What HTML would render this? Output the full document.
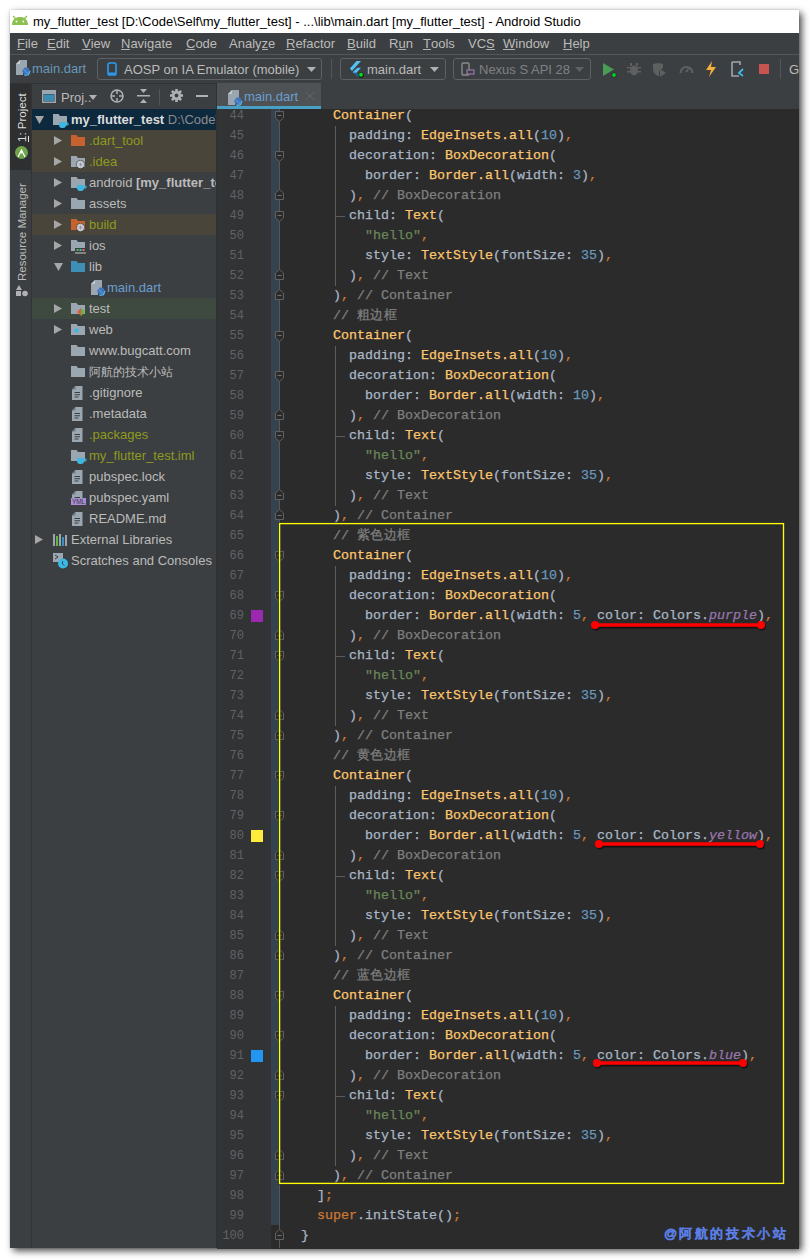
<!DOCTYPE html><html><head><meta charset="utf-8"><style>
*{box-sizing:border-box}
html,body{margin:0;padding:0}
body{width:810px;height:1260px;background:#fff;position:relative;overflow:hidden;font-family:"Liberation Sans",sans-serif;}
.a{position:absolute}
svg{position:absolute;overflow:visible}
.win{left:10px;top:10px;width:789px;height:1238px;background:#3c3f41;box-shadow:3px 3px 7px rgba(0,0,0,.7),0 0 2px rgba(0,0,0,.15)}
.title{left:10px;top:10px;width:789px;height:23px;background:#fff}
.ttxt{left:33px;top:13px;font-size:13px;color:#000;white-space:nowrap;line-height:17px}
.menu{left:10px;top:33px;width:789px;height:21px;background:#3c3f41}
.mi{top:34.5px;font-size:13px;color:#bbbbbb;line-height:17px;white-space:nowrap}
.mi u{text-decoration:none;position:relative}.mi u::after{content:'';position:absolute;left:0;right:0;top:13px;height:1px;background:#b0b0b0}
.sep1{left:10px;top:54px;width:789px;height:1px;background:#515658}
.tb{left:10px;top:55px;width:789px;height:28px;background:#3c3f41}
.sep2{left:10px;top:83px;width:789px;height:1px;background:#2f3133}
.t13{font-size:13px;line-height:17px;white-space:nowrap;color:#bbbbbb}
.combo{border:1px solid #5e6162;border-radius:3px;height:22px;top:58px}
.stripe{left:10px;top:84px;width:21px;height:1164px;background:#3c3f41}
.stripesel{left:10px;top:84px;width:21px;height:86px;background:#2d2f30}
.stripeline{left:31px;top:84px;width:1px;height:1164px;background:#323435}
.proj{left:32px;top:84px;width:184px;height:1164px;background:#3c3f41}
.projline{left:216px;top:84px;width:1px;height:1164px;background:#2f3133}
.tabbar{left:217px;top:83px;width:582px;height:26px;background:#3c3f41}
.tab{left:217px;top:83px;width:104px;height:26px;background:#4e5254}
.tabul{left:217px;top:106px;width:104px;height:3px;background:#4a9fc4}
.editor{left:217px;top:109px;width:582px;height:1140px;background:#2b2b2b;overflow:hidden}
.gutter{left:217px;top:109px;width:54px;height:1140px;background:#313335}
.gbar{left:271px;top:109px;width:8px;height:1116px;background:#34434d}
.row{left:32px;width:184px;height:21px}
.ln{font-family:"Liberation Mono",monospace;font-size:12px;color:#606366;text-align:right;width:30px;left:214px;line-height:20px;white-space:pre}
.cl{font-family:"Liberation Mono",monospace;font-size:13.33px;white-space:pre;line-height:20px;left:301px;color:#a9b7c6;-webkit-text-stroke:0.25px currentColor}
.k{color:#ffc66d}.n{color:#6897bb}.s{color:#6a8759}.o{color:#cc7832}.c{color:#808080}.p{color:#9876aa;font-style:italic}
</style></head><body>
<div class="a win"></div>
<div class="a title"></div>
<svg style="left:12px;top:15px" width="16" height="10" viewBox="0 0 16 10"><path d="M0 10 C0 4.5 3.5 2 8 2 C12.5 2 16 4.5 16 10 Z" fill="#8cc152"/><line x1="1" y1="1" x2="3.5" y2="3.5" stroke="#8cc152" stroke-width="1.2"/><line x1="15" y1="1" x2="12.5" y2="3.5" stroke="#8cc152" stroke-width="1.2"/><circle cx="4.5" cy="6.5" r="0.9" fill="#fff"/><circle cx="11.3" cy="6.5" r="0.9" fill="#fff"/></svg>
<div class="a ttxt">my_flutter_test [D:\Code\Self\my_flutter_test] - ...\lib\main.dart [my_flutter_test] - Android Studio</div>
<div class="a menu"></div>
<div class="a mi" style="left:17px"><u>F</u>ile</div>
<div class="a mi" style="left:47px"><u>E</u>dit</div>
<div class="a mi" style="left:82px"><u>V</u>iew</div>
<div class="a mi" style="left:121px"><u>N</u>avigate</div>
<div class="a mi" style="left:186px"><u>C</u>ode</div>
<div class="a mi" style="left:229px">Analy<u>z</u>e</div>
<div class="a mi" style="left:286px"><u>R</u>efactor</div>
<div class="a mi" style="left:347px"><u>B</u>uild</div>
<div class="a mi" style="left:389px">R<u>u</u>n</div>
<div class="a mi" style="left:423px"><u>T</u>ools</div>
<div class="a mi" style="left:468px">VC<u>S</u></div>
<div class="a mi" style="left:503px"><u>W</u>indow</div>
<div class="a mi" style="left:563px"><u>H</u>elp</div>
<div class="a sep1"></div>
<div class="a tb"></div>
<div class="a sep2"></div>
<svg style="left:16px;top:60px" width="14" height="16" viewBox="0 0 14 16"><path d="M4 0 H11 V8 L7 10 V15 H0 V4 Z" fill="#9aa7b0"/><path d="M0 4 L4 0 V4 Z" fill="#c4cbd0"/><path d="M6 11 L8.5 7.5 L12 7.5 L14 11 L12.5 14.5 L8.5 15 Z" fill="#3f75bf"/><path d="M7.5 9.5 L12 13.5" stroke="#6aa0e0" stroke-width="1"/><path d="M8.5 15.3 L12.5 14.8 L14 11" fill="none" stroke="#50bef0" stroke-width="1.2"/></svg>
<div class="a t13" style="left:32px;top:60px;color:#6897bb">main.dart</div>
<div class="a combo" style="left:97px;width:225px"></div>
<svg style="left:107px;top:62px" width="10" height="14" viewBox="0 0 10 14"><rect x="1" y="1" width="8" height="12" rx="1.8" fill="none" stroke="#2b9cf2" stroke-width="1.6"/><rect x="2" y="10.5" width="6" height="2" fill="#2b9cf2"/></svg>
<div class="a t13" style="left:124px;top:61px">AOSP on IA Emulator (mobile)</div>
<svg style="left:307px;top:67px" width="9" height="5" viewBox="0 0 9 5"><path d="M0 0 H9 L4.5 5 Z" fill="#afb1b3"/></svg>
<div class="a" style="left:331px;top:59px;width:1px;height:20px;background:#515658"></div>
<div class="a combo" style="left:340px;width:106px"></div>
<svg style="left:348px;top:59px" width="17" height="20" viewBox="0 0 17 20"><path d="M1.9 9.5 L8.5 2 H13 L4 12 Z" fill="#52c2f5"/><path d="M4.6 13.3 L9.5 8.8 H13 L7.3 15 Z" fill="#52c2f5"/><path d="M4.6 13.3 L7.3 15 L8.5 16.5 L10.5 18 L12 17 L9 14 Z" fill="#1e63a8"/><circle cx="13.2" cy="16" r="2.6" fill="#111"/><circle cx="13" cy="15.8" r="2" fill="#00e01a"/></svg>
<div class="a t13" style="left:367px;top:61px">main.dart</div>
<svg style="left:430px;top:67px" width="9" height="5" viewBox="0 0 9 5"><path d="M0 0 H9 L4.5 5 Z" fill="#afb1b3"/></svg>
<div class="a combo" style="left:453px;width:138px"></div>
<svg style="left:461px;top:62px" width="14" height="14" viewBox="0 0 14 14"><rect x="1" y="1" width="7" height="12" rx="1" fill="none" stroke="#8c8c8c" stroke-width="1.4"/><rect x="6" y="8" width="7" height="4" fill="#3c3f41" stroke="#9876aa" stroke-width="1.2"/></svg>
<div class="a t13" style="left:479px;top:61px;color:#7f8183">Nexus S API 28</div>
<svg style="left:575px;top:67px" width="9" height="5" viewBox="0 0 9 5"><path d="M0 0 H9 L4.5 5 Z" fill="#5f6163"/></svg>
<svg style="left:602px;top:62px" width="14" height="16" viewBox="0 0 14 16"><path d="M1 1 L12 7.5 L1 14 Z" fill="#499c54"/><circle cx="12" cy="13" r="2.6" fill="#2b2b2b"/><circle cx="12" cy="13" r="1.9" fill="#00d12a"/></svg>
<svg style="left:627px;top:62px" width="14" height="14" viewBox="0 0 14 14" fill="#5e6060"><ellipse cx="7" cy="8.5" rx="4" ry="5"/><rect x="0" y="5" width="14" height="1.5"/><rect x="0" y="9" width="14" height="1.5"/><rect x="3" y="1" width="2" height="3"/><rect x="9" y="1" width="2" height="3"/></svg>
<svg style="left:652px;top:62px" width="15" height="15" viewBox="0 0 15 15" fill="#5e6060"><path d="M1 2 L6 1 L11 2 V6 L7 9 V14 L6 14 C3 13 1 10 1 7 Z"/><path d="M8 7 L14 11 L8 15 Z"/></svg>
<svg style="left:679px;top:63px" width="15" height="12" viewBox="0 0 15 12"><path d="M1.5 10 A6 6 0 0 1 13.5 10" fill="none" stroke="#5e6060" stroke-width="2.2"/><path d="M7 9 L11 4" stroke="#5e6060" stroke-width="2"/></svg>
<svg style="left:705px;top:61px" width="12" height="16" viewBox="0 0 12 16"><path d="M7 0 L1 9 H6 L4 16 L11 6 H6 Z" fill="#f4af3d"/></svg>
<svg style="left:731px;top:61px" width="14" height="16" viewBox="0 0 14 16"><path d="M1 1 H9 V4 M1 1 V15 H8" fill="none" stroke="#9aa7b0" stroke-width="1.6"/><path d="M12 8 L8 12 L12 15" fill="none" stroke="#40b6e0" stroke-width="1.8"/></svg>
<div class="a" style="left:759px;top:64px;width:10px;height:10px;background:#c75450"></div>
<div class="a" style="left:780px;top:59px;width:1px;height:20px;background:#515658"></div>
<div class="a t13" style="left:789px;top:61px">G</div>
<div class="a stripe"></div><div class="a stripesel"></div><div class="a stripeline"></div>
<div class="a t13" style="left:15px;top:142px;transform-origin:0 0;transform:rotate(-90deg);font-size:11.5px;color:#dddddd;line-height:15px"><u style="text-decoration:none;border-bottom:1px solid #ddd;line-height:9.5px;display:inline-block">1</u>: Project</div>
<svg style="left:15px;top:146px" width="13" height="13" viewBox="0 0 13 13"><circle cx="6.5" cy="6.5" r="6.5" fill="#6fa64c"/><path d="M3 11 L6.5 4 L10 11" fill="none" stroke="#fff" stroke-width="1.2"/><circle cx="6.5" cy="6" r="1.5" fill="#fff"/></svg>
<div class="a t13" style="left:15px;top:281px;transform-origin:0 0;transform:rotate(-90deg);font-size:11.5px;line-height:15px">Resource Manager</div>
<svg style="left:16px;top:285px" width="12" height="12" viewBox="0 0 12 12" fill="#afb1b3"><path d="M3 0 L6 5 H0 Z"/><rect x="0" y="6" width="5" height="5"/><circle cx="9" cy="8.5" r="2.8"/></svg>
<div class="a proj"></div><div class="a projline"></div>
<svg style="left:42px;top:90px" width="14" height="13" viewBox="0 0 14 13"><path d="M0 0 H14 V13 H0 Z M1.5 4 V11.5 H12.5 V4 Z" fill="#9aa7b0" fill-rule="evenodd"/><rect x="2" y="4.5" width="10" height="6.5" fill="#3a8cb0"/></svg>
<div class="a t13" style="left:61px;top:89px">Proj..</div>
<svg style="left:89px;top:95px" width="8" height="5" viewBox="0 0 8 5"><path d="M0 0 H8 L4 5 Z" fill="#afb1b3"/></svg>
<svg style="left:110px;top:89px" width="14" height="14" viewBox="0 0 14 14"><circle cx="7" cy="7" r="6" fill="none" stroke="#afb1b3" stroke-width="1.5"/><path d="M7 1 V5 M7 9 V13 M1 7 H5 M9 7 H13" stroke="#afb1b3" stroke-width="1.5"/></svg>
<svg style="left:137px;top:89px" width="13" height="14" viewBox="0 0 13 14" fill="#afb1b3"><rect x="0" y="6" width="13" height="1.5"/><path d="M3 0 H10 L6.5 4 Z"/><path d="M3 14 H10 L6.5 10 Z"/></svg>
<div class="a" style="left:159px;top:89px;width:1px;height:16px;background:#515658"></div>
<svg style="left:170px;top:89px" width="13" height="13" viewBox="0 0 13 13"><g fill="#afb1b3"><rect x="5.2" y="0" width="2.6" height="3" transform="rotate(0 6.5 6.5)"/><rect x="5.2" y="0" width="2.6" height="3" transform="rotate(45 6.5 6.5)"/><rect x="5.2" y="0" width="2.6" height="3" transform="rotate(90 6.5 6.5)"/><rect x="5.2" y="0" width="2.6" height="3" transform="rotate(135 6.5 6.5)"/><rect x="5.2" y="0" width="2.6" height="3" transform="rotate(180 6.5 6.5)"/><rect x="5.2" y="0" width="2.6" height="3" transform="rotate(225 6.5 6.5)"/><rect x="5.2" y="0" width="2.6" height="3" transform="rotate(270 6.5 6.5)"/><rect x="5.2" y="0" width="2.6" height="3" transform="rotate(315 6.5 6.5)"/><circle cx="6.5" cy="6.5" r="4.6"/></g><circle cx="6.5" cy="6.5" r="1.9" fill="#3c3f41"/></svg>
<div class="a" style="left:196px;top:95px;width:12px;height:2px;background:#afb1b3"></div>
<div class="a" style="left:32px;top:109px;width:184px;height:462px;overflow:hidden">
<div class="a" style="left:0;top:0px;width:184px;height:21px;background:#0d293e"></div>
<svg style="left:3px;top:7px" width="9" height="8" viewBox="0 0 9 8"><path d="M0 0 H9 L4.5 8 Z" fill="#a6a6a6"/></svg>
<svg style="left:21px;top:5px" width="14" height="12" viewBox="0 0 14 12"><path d="M0 0 H5.5 L7 2 H14 V11 H0 Z" fill="#9aa7b0"/></svg>
<svg style="left:27px;top:13px" width="9" height="6" viewBox="0 0 9 6"><path d="M0 0 H7 V3 A3 3 0 0 1 4 6 H3 A3 3 0 0 1 0 3 Z" fill="#40b6e0"/><path d="M7 1 H9 V3 H7" fill="none" stroke="#40b6e0" stroke-width="1"/></svg>
<div class="a t13" style="left:39px;top:2px;color:#bbbbbb"><b style="color:#dddddd">my_flutter_test</b> <span style="color:#8c8c8c">D:\Code\Self\my_flutter_test</span></div>
<div class="a" style="left:0;top:21px;width:184px;height:21px;background:#49453a"></div>
<svg style="left:22px;top:27px" width="8" height="9" viewBox="0 0 8 9"><path d="M0 0 L8 4.5 L0 9 Z" fill="#a6a6a6"/></svg>
<svg style="left:39px;top:26px" width="14" height="12" viewBox="0 0 14 12"><path d="M0 0 H5.5 L7 2 H14 V11 H0 Z" fill="#c5622f"/></svg>
<div class="a t13" style="left:57px;top:23px;color:#8e9a1e">.dart_tool</div>
<div class="a" style="left:0;top:42px;width:184px;height:21px;background:#49453a"></div>
<svg style="left:22px;top:48px" width="8" height="9" viewBox="0 0 8 9"><path d="M0 0 L8 4.5 L0 9 Z" fill="#a6a6a6"/></svg>
<svg style="left:39px;top:47px" width="14" height="12" viewBox="0 0 14 12"><path d="M0 0 H5.5 L7 2 H14 V11 H0 Z" fill="#9aa7b0"/></svg>
<svg style="left:44px;top:51px" width="9" height="9" viewBox="0 0 9 9"><circle cx="4.5" cy="4.5" r="4.6" fill="#3c3f41" opacity=".6"/><g fill="#c6ccd0"><path d="M4.5 4.5 L4.5 0.5 Q7 1 7.8 3 Z" transform="rotate(0 4.5 4.5)"/><path d="M4.5 4.5 L4.5 0.5 Q7 1 7.8 3 Z" transform="rotate(60 4.5 4.5)"/><path d="M4.5 4.5 L4.5 0.5 Q7 1 7.8 3 Z" transform="rotate(120 4.5 4.5)"/><path d="M4.5 4.5 L4.5 0.5 Q7 1 7.8 3 Z" transform="rotate(180 4.5 4.5)"/><path d="M4.5 4.5 L4.5 0.5 Q7 1 7.8 3 Z" transform="rotate(240 4.5 4.5)"/><path d="M4.5 4.5 L4.5 0.5 Q7 1 7.8 3 Z" transform="rotate(300 4.5 4.5)"/></g><circle cx="4.5" cy="4.5" r="1" fill="#8a7aa8"/></svg>
<div class="a t13" style="left:57px;top:44px;color:#8e9a1e">.idea</div>
<svg style="left:22px;top:69px" width="8" height="9" viewBox="0 0 8 9"><path d="M0 0 L8 4.5 L0 9 Z" fill="#a6a6a6"/></svg>
<svg style="left:39px;top:68px" width="14" height="12" viewBox="0 0 14 12"><path d="M0 0 H5.5 L7 2 H14 V11 H0 Z" fill="#9aa7b0"/></svg>
<svg style="left:45px;top:76px" width="9" height="6" viewBox="0 0 9 6"><path d="M0 0 H7 V3 A3 3 0 0 1 4 6 H3 A3 3 0 0 1 0 3 Z" fill="#40b6e0"/><path d="M7 1 H9 V3 H7" fill="none" stroke="#40b6e0" stroke-width="1"/></svg>
<div class="a t13" style="left:57px;top:65px;color:#bbbbbb">android <b>[my_flutter_test_android]</b></div>
<svg style="left:22px;top:90px" width="8" height="9" viewBox="0 0 8 9"><path d="M0 0 L8 4.5 L0 9 Z" fill="#a6a6a6"/></svg>
<svg style="left:39px;top:89px" width="14" height="12" viewBox="0 0 14 12"><path d="M0 0 H5.5 L7 2 H14 V11 H0 Z" fill="#9aa7b0"/></svg>
<div class="a t13" style="left:57px;top:86px;color:#bbbbbb">assets</div>
<div class="a" style="left:0;top:105px;width:184px;height:21px;background:#49453a"></div>
<svg style="left:22px;top:111px" width="8" height="9" viewBox="0 0 8 9"><path d="M0 0 L8 4.5 L0 9 Z" fill="#a6a6a6"/></svg>
<svg style="left:39px;top:110px" width="14" height="12" viewBox="0 0 14 12"><path d="M0 0 H5.5 L7 2 H14 V11 H0 Z" fill="#c5622f"/></svg>
<svg style="left:44px;top:114px" width="9" height="9" viewBox="0 0 9 9"><circle cx="4.5" cy="4.5" r="4.6" fill="#3c3f41" opacity=".6"/><g fill="#c6ccd0"><path d="M4.5 4.5 L4.5 0.5 Q7 1 7.8 3 Z" transform="rotate(0 4.5 4.5)"/><path d="M4.5 4.5 L4.5 0.5 Q7 1 7.8 3 Z" transform="rotate(60 4.5 4.5)"/><path d="M4.5 4.5 L4.5 0.5 Q7 1 7.8 3 Z" transform="rotate(120 4.5 4.5)"/><path d="M4.5 4.5 L4.5 0.5 Q7 1 7.8 3 Z" transform="rotate(180 4.5 4.5)"/><path d="M4.5 4.5 L4.5 0.5 Q7 1 7.8 3 Z" transform="rotate(240 4.5 4.5)"/><path d="M4.5 4.5 L4.5 0.5 Q7 1 7.8 3 Z" transform="rotate(300 4.5 4.5)"/></g><circle cx="4.5" cy="4.5" r="1" fill="#8a7aa8"/></svg>
<div class="a t13" style="left:57px;top:107px;color:#8e9a1e">build</div>
<svg style="left:22px;top:132px" width="8" height="9" viewBox="0 0 8 9"><path d="M0 0 L8 4.5 L0 9 Z" fill="#a6a6a6"/></svg>
<svg style="left:39px;top:131px" width="14" height="12" viewBox="0 0 14 12"><path d="M0 0 H5.5 L7 2 H14 V11 H0 Z" fill="#9aa7b0"/></svg>
<svg style="left:43px;top:139px" width="11" height="7" viewBox="0 0 11 7"><rect x="0" y="0" width="11" height="3.5" fill="#3c3f41"/><rect x="1.5" y="1" width="2" height="2" fill="#62b543"/><rect x="4.5" y="1" width="2" height="2" fill="#40b6e0"/><rect x="7.5" y="1" width="2" height="2" fill="#e07a3a"/><rect x="0" y="4.5" width="11" height="1" fill="#c8c8c8"/></svg>
<div class="a t13" style="left:57px;top:128px;color:#bbbbbb">ios</div>
<svg style="left:22px;top:154px" width="9" height="8" viewBox="0 0 9 8"><path d="M0 0 H9 L4.5 8 Z" fill="#a6a6a6"/></svg>
<svg style="left:39px;top:152px" width="14" height="12" viewBox="0 0 14 12"><path d="M0 0 H5.5 L7 2 H14 V11 H0 Z" fill="#3d8fb5"/></svg>
<div class="a t13" style="left:57px;top:149px;color:#bbbbbb">lib</div>
<svg style="left:59px;top:171px" width="14" height="16" viewBox="0 0 14 16"><path d="M4 0 H11 V8 L7 10 V15 H0 V4 Z" fill="#9aa7b0"/><path d="M0 4 L4 0 V4 Z" fill="#c4cbd0"/><path d="M6 11 L8.5 7.5 L12 7.5 L14 11 L12.5 14.5 L8.5 15 Z" fill="#3f75bf"/><path d="M7.5 9.5 L12 13.5" stroke="#6aa0e0" stroke-width="1"/><path d="M8.5 15.3 L12.5 14.8 L14 11" fill="none" stroke="#50bef0" stroke-width="1.2"/></svg>
<div class="a t13" style="left:75px;top:170px;color:#6a9fd0">main.dart</div>
<div class="a" style="left:0;top:189px;width:184px;height:21px;background:#3e4a3f"></div>
<svg style="left:22px;top:195px" width="8" height="9" viewBox="0 0 8 9"><path d="M0 0 L8 4.5 L0 9 Z" fill="#a6a6a6"/></svg>
<svg style="left:39px;top:194px" width="14" height="12" viewBox="0 0 14 12"><path d="M0 0 H5.5 L7 2 H14 V11 H0 Z" fill="#9aa7b0"/></svg>
<svg style="left:45px;top:199px" width="8" height="8" viewBox="0 0 8 8"><path d="M4 0 L0 4 L4 8 Z" fill="#e05a3a"/><path d="M4 0 L8 4 L4 8 Z" fill="#62b543"/></svg>
<div class="a t13" style="left:57px;top:191px;color:#bbbbbb">test</div>
<svg style="left:22px;top:216px" width="8" height="9" viewBox="0 0 8 9"><path d="M0 0 L8 4.5 L0 9 Z" fill="#a6a6a6"/></svg>
<svg style="left:39px;top:215px" width="14" height="12" viewBox="0 0 14 12"><path d="M0 0 H5.5 L7 2 H14 V11 H0 Z" fill="#9aa7b0"/></svg>
<svg style="left:41px;top:218px" width="7" height="7" viewBox="0 0 7 7"><circle cx="3.5" cy="3.5" r="2.3" fill="#40b6e0"/></svg>
<div class="a t13" style="left:57px;top:212px;color:#bbbbbb">web</div>
<svg style="left:39px;top:236px" width="14" height="12" viewBox="0 0 14 12"><path d="M0 0 H5.5 L7 2 H14 V11 H0 Z" fill="#9aa7b0"/></svg>
<div class="a t13" style="left:57px;top:233px;color:#bbbbbb">www.bugcatt.com</div>
<svg style="left:39px;top:257px" width="14" height="12" viewBox="0 0 14 12"><path d="M0 0 H5.5 L7 2 H14 V11 H0 Z" fill="#9aa7b0"/></svg>
<div class="a t13" style="left:57px;top:254px;color:#bbbbbb"><span style="font-size:12px"><span style="display:inline-block;width:12px;text-align:center">阿</span><span style="display:inline-block;width:12px;text-align:center">航</span><span style="display:inline-block;width:12px;text-align:center">的</span><span style="display:inline-block;width:12px;text-align:center">技</span><span style="display:inline-block;width:12px;text-align:center">术</span><span style="display:inline-block;width:12px;text-align:center">小</span><span style="display:inline-block;width:12px;text-align:center">站</span></span></div>
<svg style="left:40px;top:277px" width="11" height="14" viewBox="0 0 11 14"><path d="M3.5 0 H10.5 V14 H0 V3.5 Z" fill="#9aa7b0"/><path d="M0 3.5 L3.5 0 V3.5 Z" fill="#6e7b84"/><path d="M2.5 6.5 H8 M2.5 8.8 H8 M2.5 11 H6.5" stroke="#3c3f41" stroke-width="1.1"/></svg>
<div class="a t13" style="left:57px;top:275px;color:#bbbbbb">.gitignore</div>
<svg style="left:40px;top:298px" width="11" height="14" viewBox="0 0 11 14"><path d="M3.5 0 H10.5 V14 H0 V3.5 Z" fill="#9aa7b0"/><path d="M0 3.5 L3.5 0 V3.5 Z" fill="#6e7b84"/><path d="M2.5 6.5 H8 M2.5 8.8 H8 M2.5 11 H6.5" stroke="#3c3f41" stroke-width="1.1"/></svg>
<div class="a t13" style="left:57px;top:296px;color:#bbbbbb">.metadata</div>
<svg style="left:40px;top:319px" width="11" height="14" viewBox="0 0 11 14"><path d="M3.5 0 H10.5 V14 H0 V3.5 Z" fill="#9aa7b0"/><path d="M0 3.5 L3.5 0 V3.5 Z" fill="#6e7b84"/><path d="M2.5 6.5 H8 M2.5 8.8 H8 M2.5 11 H6.5" stroke="#3c3f41" stroke-width="1.1"/></svg>
<div class="a t13" style="left:57px;top:317px;color:#8e9a1e">.packages</div>
<svg style="left:39px;top:341px" width="14" height="12" viewBox="0 0 14 12"><path d="M0 0 H5.5 L7 2 H14 V11 H0 Z" fill="#9aa7b0"/></svg>
<svg style="left:45px;top:349px" width="9" height="6" viewBox="0 0 9 6"><path d="M0 0 H7 V3 A3 3 0 0 1 4 6 H3 A3 3 0 0 1 0 3 Z" fill="#40b6e0"/><path d="M7 1 H9 V3 H7" fill="none" stroke="#40b6e0" stroke-width="1"/></svg>
<div class="a t13" style="left:57px;top:338px;color:#8e9a1e">my_flutter_test.iml</div>
<svg style="left:40px;top:361px" width="11" height="14" viewBox="0 0 11 14"><path d="M3.5 0 H10.5 V14 H0 V3.5 Z" fill="#9aa7b0"/><path d="M0 3.5 L3.5 0 V3.5 Z" fill="#6e7b84"/><path d="M2.5 6.5 H8 M2.5 8.8 H8 M2.5 11 H6.5" stroke="#3c3f41" stroke-width="1.1"/></svg>
<div class="a t13" style="left:57px;top:359px;color:#bbbbbb">pubspec.lock</div>
<svg style="left:40px;top:382px" width="11" height="14" viewBox="0 0 11 14"><path d="M3.5 0 H10.5 V14 H0 V3.5 Z" fill="#9aa7b0"/><path d="M0 3.5 L3.5 0 V3.5 Z" fill="#6e7b84"/><path d="M2.5 6.5 H8 M2.5 8.8 H8 M2.5 11 H6.5" stroke="#3c3f41" stroke-width="1.1"/></svg>
<div class="a" style="left:39px;top:389px;width:15px;height:7px;background:#a98cd2;font-size:6.5px;line-height:7px;color:#3a3a48;text-align:center;letter-spacing:-0.2px">YML</div>
<div class="a t13" style="left:57px;top:380px;color:#bbbbbb">pubspec.yaml</div>
<svg style="left:40px;top:403px" width="11" height="14" viewBox="0 0 11 14"><path d="M3.5 0 H10.5 V14 H0 V3.5 Z" fill="#9aa7b0"/><path d="M0 3.5 L3.5 0 V3.5 Z" fill="#6e7b84"/><path d="M2.5 6.5 H8 M2.5 8.8 H8 M2.5 11 H6.5" stroke="#3c3f41" stroke-width="1.1"/></svg>
<div class="a t13" style="left:57px;top:401px;color:#bbbbbb">README.md</div>
<svg style="left:3px;top:426px" width="8" height="9" viewBox="0 0 8 9"><path d="M0 0 L8 4.5 L0 9 Z" fill="#a6a6a6"/></svg>
<svg style="left:21px;top:425px" width="14" height="12" viewBox="0 0 14 12"><rect x="0" y="0" width="2" height="12" fill="#9aa7b0"/><rect x="3" y="2" width="2" height="10" fill="#62b543"/><rect x="6" y="0" width="2" height="12" fill="#9aa7b0"/><rect x="9" y="3" width="2" height="9" fill="#3592c4"/><rect x="12" y="1" width="2" height="11" fill="#9aa7b0"/></svg>
<div class="a t13" style="left:39px;top:422px;color:#bbbbbb">External Libraries</div>
<svg style="left:21px;top:444px" width="16" height="16" viewBox="0 0 16 16"><rect x="0" y="0" width="10" height="9" fill="#9aa7b0"/><path d="M2 2 L5 4 L2 6" fill="none" stroke="#3c3f41" stroke-width="1"/><circle cx="10" cy="10.5" r="5" fill="#3cb8e6"/><path d="M9.5 8 V11 L11.5 12.5" fill="none" stroke="#2b4a5a" stroke-width="1"/></svg>
<div class="a t13" style="left:39px;top:443px;color:#bbbbbb">Scratches and Consoles</div>
</div>
<div class="a tabbar"></div>
<div class="a tab"></div><div class="a tabul"></div>
<svg style="left:228px;top:90px" width="14" height="16" viewBox="0 0 14 16"><path d="M4 0 H11 V8 L7 10 V15 H0 V4 Z" fill="#9aa7b0"/><path d="M0 4 L4 0 V4 Z" fill="#c4cbd0"/><path d="M6 11 L8.5 7.5 L12 7.5 L14 11 L12.5 14.5 L8.5 15 Z" fill="#3f75bf"/><path d="M7.5 9.5 L12 13.5" stroke="#6aa0e0" stroke-width="1"/><path d="M8.5 15.3 L12.5 14.8 L14 11" fill="none" stroke="#50bef0" stroke-width="1.2"/></svg>
<div class="a t13" style="left:244px;top:88px;color:#6a9fd0">main.dart</div>
<svg style="left:306px;top:92px" width="8" height="8" viewBox="0 0 8 8"><path d="M0 0 L8 8 M8 0 L0 8" stroke="#626567" stroke-width="1"/></svg>
<div class="a editor"></div>
<div class="a gutter"></div>
<div class="a gbar"></div>
<div class="a ln" style="top:106px">44</div>
<div class="a cl" style="top:106px">    <span class="k">Container</span>(</div>
<div class="a ln" style="top:126px">45</div>
<div class="a cl" style="top:126px">      padding: <span class="k">EdgeInsets.all</span>(<span class="n">10</span>)<span class="o">,</span></div>
<div class="a ln" style="top:146px">46</div>
<div class="a cl" style="top:146px">      decoration: <span class="k">BoxDecoration</span>(</div>
<div class="a ln" style="top:166px">47</div>
<div class="a cl" style="top:166px">        border: <span class="k">Border.all</span>(width: <span class="n">3</span>)<span class="o">,</span></div>
<div class="a ln" style="top:186px">48</div>
<div class="a cl" style="top:186px">      )<span class="o">,</span><span class="c"> // BoxDecoration</span></div>
<div class="a ln" style="top:206px">49</div>
<div class="a cl" style="top:206px">      child: <span class="k">Text</span>(</div>
<div class="a ln" style="top:226px">50</div>
<div class="a cl" style="top:226px">    <span class="s">    &quot;hello&quot;</span><span class="o">,</span></div>
<div class="a ln" style="top:246px">51</div>
<div class="a cl" style="top:246px">        style: <span class="k">TextStyle</span>(fontSize: <span class="n">35</span>)<span class="o">,</span></div>
<div class="a ln" style="top:266px">52</div>
<div class="a cl" style="top:266px">      )<span class="o">,</span><span class="c"> // Text</span></div>
<div class="a ln" style="top:286px">53</div>
<div class="a cl" style="top:286px">    )<span class="o">,</span><span class="c"> // Container</span></div>
<div class="a ln" style="top:306px">54</div>
<div class="a cl" style="top:306px">    <span class="c">// <span style="display:inline-block;width:13.33px;text-align:center">粗</span><span style="display:inline-block;width:13.33px;text-align:center">边</span><span style="display:inline-block;width:13.33px;text-align:center">框</span></span></div>
<div class="a ln" style="top:326px">55</div>
<div class="a cl" style="top:326px">    <span class="k">Container</span>(</div>
<div class="a ln" style="top:346px">56</div>
<div class="a cl" style="top:346px">      padding: <span class="k">EdgeInsets.all</span>(<span class="n">10</span>)<span class="o">,</span></div>
<div class="a ln" style="top:366px">57</div>
<div class="a cl" style="top:366px">      decoration: <span class="k">BoxDecoration</span>(</div>
<div class="a ln" style="top:386px">58</div>
<div class="a cl" style="top:386px">        border: <span class="k">Border.all</span>(width: <span class="n">10</span>)<span class="o">,</span></div>
<div class="a ln" style="top:406px">59</div>
<div class="a cl" style="top:406px">      )<span class="o">,</span><span class="c"> // BoxDecoration</span></div>
<div class="a ln" style="top:426px">60</div>
<div class="a cl" style="top:426px">      child: <span class="k">Text</span>(</div>
<div class="a ln" style="top:446px">61</div>
<div class="a cl" style="top:446px">    <span class="s">    &quot;hello&quot;</span><span class="o">,</span></div>
<div class="a ln" style="top:466px">62</div>
<div class="a cl" style="top:466px">        style: <span class="k">TextStyle</span>(fontSize: <span class="n">35</span>)<span class="o">,</span></div>
<div class="a ln" style="top:486px">63</div>
<div class="a cl" style="top:486px">      )<span class="o">,</span><span class="c"> // Text</span></div>
<div class="a ln" style="top:506px">64</div>
<div class="a cl" style="top:506px">    )<span class="o">,</span><span class="c"> // Container</span></div>
<div class="a ln" style="top:526px">65</div>
<div class="a cl" style="top:526px">    <span class="c">// <span style="display:inline-block;width:13.33px;text-align:center">紫</span><span style="display:inline-block;width:13.33px;text-align:center">色</span><span style="display:inline-block;width:13.33px;text-align:center">边</span><span style="display:inline-block;width:13.33px;text-align:center">框</span></span></div>
<div class="a ln" style="top:546px">66</div>
<div class="a cl" style="top:546px">    <span class="k">Container</span>(</div>
<div class="a ln" style="top:566px">67</div>
<div class="a cl" style="top:566px">      padding: <span class="k">EdgeInsets.all</span>(<span class="n">10</span>)<span class="o">,</span></div>
<div class="a ln" style="top:586px">68</div>
<div class="a cl" style="top:586px">      decoration: <span class="k">BoxDecoration</span>(</div>
<div class="a ln" style="top:606px">69</div>
<div class="a cl" style="top:606px">        border: <span class="k">Border.all</span>(width: <span class="n">5</span><span class="o">,</span> color: Colors.<span class="p">purple</span>)<span class="o">,</span></div>
<div class="a ln" style="top:626px">70</div>
<div class="a cl" style="top:626px">      )<span class="o">,</span><span class="c"> // BoxDecoration</span></div>
<div class="a ln" style="top:646px">71</div>
<div class="a cl" style="top:646px">      child: <span class="k">Text</span>(</div>
<div class="a ln" style="top:666px">72</div>
<div class="a cl" style="top:666px">    <span class="s">    &quot;hello&quot;</span><span class="o">,</span></div>
<div class="a ln" style="top:686px">73</div>
<div class="a cl" style="top:686px">        style: <span class="k">TextStyle</span>(fontSize: <span class="n">35</span>)<span class="o">,</span></div>
<div class="a ln" style="top:706px">74</div>
<div class="a cl" style="top:706px">      )<span class="o">,</span><span class="c"> // Text</span></div>
<div class="a ln" style="top:726px">75</div>
<div class="a cl" style="top:726px">    )<span class="o">,</span><span class="c"> // Container</span></div>
<div class="a ln" style="top:746px">76</div>
<div class="a cl" style="top:746px">    <span class="c">// <span style="display:inline-block;width:13.33px;text-align:center">黄</span><span style="display:inline-block;width:13.33px;text-align:center">色</span><span style="display:inline-block;width:13.33px;text-align:center">边</span><span style="display:inline-block;width:13.33px;text-align:center">框</span></span></div>
<div class="a ln" style="top:766px">77</div>
<div class="a cl" style="top:766px">    <span class="k">Container</span>(</div>
<div class="a ln" style="top:786px">78</div>
<div class="a cl" style="top:786px">      padding: <span class="k">EdgeInsets.all</span>(<span class="n">10</span>)<span class="o">,</span></div>
<div class="a ln" style="top:806px">79</div>
<div class="a cl" style="top:806px">      decoration: <span class="k">BoxDecoration</span>(</div>
<div class="a ln" style="top:826px">80</div>
<div class="a cl" style="top:826px">        border: <span class="k">Border.all</span>(width: <span class="n">5</span><span class="o">,</span> color: Colors.<span class="p">yellow</span>)<span class="o">,</span></div>
<div class="a ln" style="top:846px">81</div>
<div class="a cl" style="top:846px">      )<span class="o">,</span><span class="c"> // BoxDecoration</span></div>
<div class="a ln" style="top:866px">82</div>
<div class="a cl" style="top:866px">      child: <span class="k">Text</span>(</div>
<div class="a ln" style="top:886px">83</div>
<div class="a cl" style="top:886px">    <span class="s">    &quot;hello&quot;</span><span class="o">,</span></div>
<div class="a ln" style="top:906px">84</div>
<div class="a cl" style="top:906px">        style: <span class="k">TextStyle</span>(fontSize: <span class="n">35</span>)<span class="o">,</span></div>
<div class="a ln" style="top:926px">85</div>
<div class="a cl" style="top:926px">      )<span class="o">,</span><span class="c"> // Text</span></div>
<div class="a ln" style="top:946px">86</div>
<div class="a cl" style="top:946px">    )<span class="o">,</span><span class="c"> // Container</span></div>
<div class="a ln" style="top:966px">87</div>
<div class="a cl" style="top:966px">    <span class="c">// <span style="display:inline-block;width:13.33px;text-align:center">蓝</span><span style="display:inline-block;width:13.33px;text-align:center">色</span><span style="display:inline-block;width:13.33px;text-align:center">边</span><span style="display:inline-block;width:13.33px;text-align:center">框</span></span></div>
<div class="a ln" style="top:986px">88</div>
<div class="a cl" style="top:986px">    <span class="k">Container</span>(</div>
<div class="a ln" style="top:1006px">89</div>
<div class="a cl" style="top:1006px">      padding: <span class="k">EdgeInsets.all</span>(<span class="n">10</span>)<span class="o">,</span></div>
<div class="a ln" style="top:1026px">90</div>
<div class="a cl" style="top:1026px">      decoration: <span class="k">BoxDecoration</span>(</div>
<div class="a ln" style="top:1046px">91</div>
<div class="a cl" style="top:1046px">        border: <span class="k">Border.all</span>(width: <span class="n">5</span><span class="o">,</span> color: Colors.<span class="p">blue</span>)<span class="o">,</span></div>
<div class="a ln" style="top:1066px">92</div>
<div class="a cl" style="top:1066px">      )<span class="o">,</span><span class="c"> // BoxDecoration</span></div>
<div class="a ln" style="top:1086px">93</div>
<div class="a cl" style="top:1086px">      child: <span class="k">Text</span>(</div>
<div class="a ln" style="top:1106px">94</div>
<div class="a cl" style="top:1106px">    <span class="s">    &quot;hello&quot;</span><span class="o">,</span></div>
<div class="a ln" style="top:1126px">95</div>
<div class="a cl" style="top:1126px">        style: <span class="k">TextStyle</span>(fontSize: <span class="n">35</span>)<span class="o">,</span></div>
<div class="a ln" style="top:1146px">96</div>
<div class="a cl" style="top:1146px">      )<span class="o">,</span><span class="c"> // Text</span></div>
<div class="a ln" style="top:1166px">97</div>
<div class="a cl" style="top:1166px">    )<span class="o">,</span><span class="c"> // Container</span></div>
<div class="a ln" style="top:1186px">98</div>
<div class="a cl" style="top:1186px">  ]<span class="o">;</span></div>
<div class="a ln" style="top:1206px">99</div>
<div class="a cl" style="top:1206px">  <span class="o">super</span>.initState()<span class="o">;</span></div>
<div class="a ln" style="top:1226px">100</div>
<div class="a cl" style="top:1226px">}</div>
<div class="a" style="left:279px;top:109px;width:1px;height:1139px;background:#575757"></div>
<svg style="left:275px;top:111px" width="10" height="11" viewBox="0 0 10 11"><path d="M0.5 0.5 H8.5 V7 L4.5 10.5 L0.5 7 Z" fill="#2b2b2b" stroke="#606060" stroke-width="1"/><path d="M2.5 4.5 H6.5" stroke="#707070" stroke-width="1"/></svg>
<svg style="left:275px;top:151px" width="10" height="11" viewBox="0 0 10 11"><path d="M0.5 0.5 H8.5 V7 L4.5 10.5 L0.5 7 Z" fill="#2b2b2b" stroke="#606060" stroke-width="1"/><path d="M2.5 4.5 H6.5" stroke="#707070" stroke-width="1"/></svg>
<svg style="left:275px;top:211px" width="10" height="11" viewBox="0 0 10 11"><path d="M0.5 0.5 H8.5 V7 L4.5 10.5 L0.5 7 Z" fill="#2b2b2b" stroke="#606060" stroke-width="1"/><path d="M2.5 4.5 H6.5" stroke="#707070" stroke-width="1"/></svg>
<svg style="left:275px;top:189px" width="10" height="11" viewBox="0 0 10 11"><path d="M0.5 10.5 H8.5 V4 L4.5 0.5 L0.5 4 Z" fill="#2b2b2b" stroke="#606060" stroke-width="1"/><path d="M2.5 6.5 H6.5" stroke="#707070" stroke-width="1"/></svg>
<svg style="left:275px;top:269px" width="10" height="11" viewBox="0 0 10 11"><path d="M0.5 10.5 H8.5 V4 L4.5 0.5 L0.5 4 Z" fill="#2b2b2b" stroke="#606060" stroke-width="1"/><path d="M2.5 6.5 H6.5" stroke="#707070" stroke-width="1"/></svg>
<svg style="left:275px;top:289px" width="10" height="11" viewBox="0 0 10 11"><path d="M0.5 10.5 H8.5 V4 L4.5 0.5 L0.5 4 Z" fill="#2b2b2b" stroke="#606060" stroke-width="1"/><path d="M2.5 6.5 H6.5" stroke="#707070" stroke-width="1"/></svg>
<svg style="left:275px;top:331px" width="10" height="11" viewBox="0 0 10 11"><path d="M0.5 0.5 H8.5 V7 L4.5 10.5 L0.5 7 Z" fill="#2b2b2b" stroke="#606060" stroke-width="1"/><path d="M2.5 4.5 H6.5" stroke="#707070" stroke-width="1"/></svg>
<svg style="left:275px;top:371px" width="10" height="11" viewBox="0 0 10 11"><path d="M0.5 0.5 H8.5 V7 L4.5 10.5 L0.5 7 Z" fill="#2b2b2b" stroke="#606060" stroke-width="1"/><path d="M2.5 4.5 H6.5" stroke="#707070" stroke-width="1"/></svg>
<svg style="left:275px;top:431px" width="10" height="11" viewBox="0 0 10 11"><path d="M0.5 0.5 H8.5 V7 L4.5 10.5 L0.5 7 Z" fill="#2b2b2b" stroke="#606060" stroke-width="1"/><path d="M2.5 4.5 H6.5" stroke="#707070" stroke-width="1"/></svg>
<svg style="left:275px;top:409px" width="10" height="11" viewBox="0 0 10 11"><path d="M0.5 10.5 H8.5 V4 L4.5 0.5 L0.5 4 Z" fill="#2b2b2b" stroke="#606060" stroke-width="1"/><path d="M2.5 6.5 H6.5" stroke="#707070" stroke-width="1"/></svg>
<svg style="left:275px;top:489px" width="10" height="11" viewBox="0 0 10 11"><path d="M0.5 10.5 H8.5 V4 L4.5 0.5 L0.5 4 Z" fill="#2b2b2b" stroke="#606060" stroke-width="1"/><path d="M2.5 6.5 H6.5" stroke="#707070" stroke-width="1"/></svg>
<svg style="left:275px;top:509px" width="10" height="11" viewBox="0 0 10 11"><path d="M0.5 10.5 H8.5 V4 L4.5 0.5 L0.5 4 Z" fill="#2b2b2b" stroke="#606060" stroke-width="1"/><path d="M2.5 6.5 H6.5" stroke="#707070" stroke-width="1"/></svg>
<svg style="left:275px;top:551px" width="10" height="11" viewBox="0 0 10 11"><path d="M0.5 0.5 H8.5 V7 L4.5 10.5 L0.5 7 Z" fill="#2b2b2b" stroke="#606060" stroke-width="1"/><path d="M2.5 4.5 H6.5" stroke="#707070" stroke-width="1"/></svg>
<svg style="left:275px;top:591px" width="10" height="11" viewBox="0 0 10 11"><path d="M0.5 0.5 H8.5 V7 L4.5 10.5 L0.5 7 Z" fill="#2b2b2b" stroke="#606060" stroke-width="1"/><path d="M2.5 4.5 H6.5" stroke="#707070" stroke-width="1"/></svg>
<svg style="left:275px;top:651px" width="10" height="11" viewBox="0 0 10 11"><path d="M0.5 0.5 H8.5 V7 L4.5 10.5 L0.5 7 Z" fill="#2b2b2b" stroke="#606060" stroke-width="1"/><path d="M2.5 4.5 H6.5" stroke="#707070" stroke-width="1"/></svg>
<svg style="left:275px;top:629px" width="10" height="11" viewBox="0 0 10 11"><path d="M0.5 10.5 H8.5 V4 L4.5 0.5 L0.5 4 Z" fill="#2b2b2b" stroke="#606060" stroke-width="1"/><path d="M2.5 6.5 H6.5" stroke="#707070" stroke-width="1"/></svg>
<svg style="left:275px;top:709px" width="10" height="11" viewBox="0 0 10 11"><path d="M0.5 10.5 H8.5 V4 L4.5 0.5 L0.5 4 Z" fill="#2b2b2b" stroke="#606060" stroke-width="1"/><path d="M2.5 6.5 H6.5" stroke="#707070" stroke-width="1"/></svg>
<svg style="left:275px;top:729px" width="10" height="11" viewBox="0 0 10 11"><path d="M0.5 10.5 H8.5 V4 L4.5 0.5 L0.5 4 Z" fill="#2b2b2b" stroke="#606060" stroke-width="1"/><path d="M2.5 6.5 H6.5" stroke="#707070" stroke-width="1"/></svg>
<svg style="left:275px;top:771px" width="10" height="11" viewBox="0 0 10 11"><path d="M0.5 0.5 H8.5 V7 L4.5 10.5 L0.5 7 Z" fill="#2b2b2b" stroke="#606060" stroke-width="1"/><path d="M2.5 4.5 H6.5" stroke="#707070" stroke-width="1"/></svg>
<svg style="left:275px;top:811px" width="10" height="11" viewBox="0 0 10 11"><path d="M0.5 0.5 H8.5 V7 L4.5 10.5 L0.5 7 Z" fill="#2b2b2b" stroke="#606060" stroke-width="1"/><path d="M2.5 4.5 H6.5" stroke="#707070" stroke-width="1"/></svg>
<svg style="left:275px;top:871px" width="10" height="11" viewBox="0 0 10 11"><path d="M0.5 0.5 H8.5 V7 L4.5 10.5 L0.5 7 Z" fill="#2b2b2b" stroke="#606060" stroke-width="1"/><path d="M2.5 4.5 H6.5" stroke="#707070" stroke-width="1"/></svg>
<svg style="left:275px;top:849px" width="10" height="11" viewBox="0 0 10 11"><path d="M0.5 10.5 H8.5 V4 L4.5 0.5 L0.5 4 Z" fill="#2b2b2b" stroke="#606060" stroke-width="1"/><path d="M2.5 6.5 H6.5" stroke="#707070" stroke-width="1"/></svg>
<svg style="left:275px;top:929px" width="10" height="11" viewBox="0 0 10 11"><path d="M0.5 10.5 H8.5 V4 L4.5 0.5 L0.5 4 Z" fill="#2b2b2b" stroke="#606060" stroke-width="1"/><path d="M2.5 6.5 H6.5" stroke="#707070" stroke-width="1"/></svg>
<svg style="left:275px;top:949px" width="10" height="11" viewBox="0 0 10 11"><path d="M0.5 10.5 H8.5 V4 L4.5 0.5 L0.5 4 Z" fill="#2b2b2b" stroke="#606060" stroke-width="1"/><path d="M2.5 6.5 H6.5" stroke="#707070" stroke-width="1"/></svg>
<svg style="left:275px;top:991px" width="10" height="11" viewBox="0 0 10 11"><path d="M0.5 0.5 H8.5 V7 L4.5 10.5 L0.5 7 Z" fill="#2b2b2b" stroke="#606060" stroke-width="1"/><path d="M2.5 4.5 H6.5" stroke="#707070" stroke-width="1"/></svg>
<svg style="left:275px;top:1031px" width="10" height="11" viewBox="0 0 10 11"><path d="M0.5 0.5 H8.5 V7 L4.5 10.5 L0.5 7 Z" fill="#2b2b2b" stroke="#606060" stroke-width="1"/><path d="M2.5 4.5 H6.5" stroke="#707070" stroke-width="1"/></svg>
<svg style="left:275px;top:1091px" width="10" height="11" viewBox="0 0 10 11"><path d="M0.5 0.5 H8.5 V7 L4.5 10.5 L0.5 7 Z" fill="#2b2b2b" stroke="#606060" stroke-width="1"/><path d="M2.5 4.5 H6.5" stroke="#707070" stroke-width="1"/></svg>
<svg style="left:275px;top:1069px" width="10" height="11" viewBox="0 0 10 11"><path d="M0.5 10.5 H8.5 V4 L4.5 0.5 L0.5 4 Z" fill="#2b2b2b" stroke="#606060" stroke-width="1"/><path d="M2.5 6.5 H6.5" stroke="#707070" stroke-width="1"/></svg>
<svg style="left:275px;top:1149px" width="10" height="11" viewBox="0 0 10 11"><path d="M0.5 10.5 H8.5 V4 L4.5 0.5 L0.5 4 Z" fill="#2b2b2b" stroke="#606060" stroke-width="1"/><path d="M2.5 6.5 H6.5" stroke="#707070" stroke-width="1"/></svg>
<svg style="left:275px;top:1169px" width="10" height="11" viewBox="0 0 10 11"><path d="M0.5 10.5 H8.5 V4 L4.5 0.5 L0.5 4 Z" fill="#2b2b2b" stroke="#606060" stroke-width="1"/><path d="M2.5 6.5 H6.5" stroke="#707070" stroke-width="1"/></svg>
<svg style="left:275px;top:1229px" width="10" height="11" viewBox="0 0 10 11"><path d="M0.5 10.5 H8.5 V4 L4.5 0.5 L0.5 4 Z" fill="#2b2b2b" stroke="#606060" stroke-width="1"/><path d="M2.5 6.5 H6.5" stroke="#707070" stroke-width="1"/></svg>
<div class="a" style="left:335px;top:126px;width:1px;height:160px;background:#5c5c5c"></div>
<div class="a" style="left:335px;top:216px;width:10px;height:1px;background:#5c5c5c"></div>
<div class="a" style="left:335px;top:346px;width:1px;height:160px;background:#5c5c5c"></div>
<div class="a" style="left:335px;top:436px;width:10px;height:1px;background:#5c5c5c"></div>
<div class="a" style="left:335px;top:566px;width:1px;height:160px;background:#5c5c5c"></div>
<div class="a" style="left:335px;top:656px;width:10px;height:1px;background:#5c5c5c"></div>
<div class="a" style="left:335px;top:786px;width:1px;height:160px;background:#5c5c5c"></div>
<div class="a" style="left:335px;top:876px;width:10px;height:1px;background:#5c5c5c"></div>
<div class="a" style="left:335px;top:1006px;width:1px;height:160px;background:#5c5c5c"></div>
<div class="a" style="left:335px;top:1096px;width:10px;height:1px;background:#5c5c5c"></div>
<div class="a" style="left:251px;top:610px;width:12px;height:12px;background:#9c27b0"></div>
<div class="a" style="left:251px;top:830px;width:12px;height:12px;background:#ffeb3b"></div>
<div class="a" style="left:251px;top:1050px;width:12px;height:12px;background:#2196f3"></div>
<svg style="left:0;top:0" width="810" height="1260"><rect x="279.6" y="523.6" width="503.9" height="659.8" fill="none" stroke="#1c1c38" stroke-width="2.8" opacity=".6"/><rect x="279.6" y="523.6" width="503.9" height="659.8" fill="none" stroke="#ffff00" stroke-width="1.4"/></svg>
<svg style="left:589px;top:618px" width="180" height="16" viewBox="0 0 180 16"><g transform="translate(1,1.5)" opacity=".5"><line x1="6" y1="7" x2="172" y2="7" stroke="#000" stroke-width="4"/><circle cx="6" cy="7" r="4" fill="#000"/><circle cx="172" cy="7" r="4" fill="#000"/></g><line x1="6" y1="7" x2="172" y2="7" stroke="#ff0000" stroke-width="3.5"/><circle cx="6" cy="7" r="4" fill="#ff0000"/><circle cx="172" cy="7" r="4" fill="#ff0000"/></svg>
<svg style="left:593px;top:837px" width="175" height="16" viewBox="0 0 175 16"><g transform="translate(1,1.5)" opacity=".5"><line x1="6" y1="7" x2="167" y2="7" stroke="#000" stroke-width="4"/><circle cx="6" cy="7" r="4" fill="#000"/><circle cx="167" cy="7" r="4" fill="#000"/></g><line x1="6" y1="7" x2="167" y2="7" stroke="#ff0000" stroke-width="3.5"/><circle cx="6" cy="7" r="4" fill="#ff0000"/><circle cx="167" cy="7" r="4" fill="#ff0000"/></svg>
<svg style="left:591px;top:1056px" width="160" height="16" viewBox="0 0 160 16"><g transform="translate(1,1.5)" opacity=".5"><line x1="6" y1="7" x2="152" y2="7" stroke="#000" stroke-width="4"/><circle cx="6" cy="7" r="4" fill="#000"/><circle cx="152" cy="7" r="4" fill="#000"/></g><line x1="6" y1="7" x2="152" y2="7" stroke="#ff0000" stroke-width="3.5"/><circle cx="6" cy="7" r="4" fill="#ff0000"/><circle cx="152" cy="7" r="4" fill="#ff0000"/></svg>
<div class="a" style="left:664px;top:1225px;font-size:13px;line-height:17px;color:#3a3a3a;-webkit-text-stroke:0.9px #5b7fe6;white-space:nowrap;letter-spacing:1px">@<span style="display:inline-block;width:15.7px;text-align:center">阿</span><span style="display:inline-block;width:15.7px;text-align:center">航</span><span style="display:inline-block;width:15.7px;text-align:center">的</span><span style="display:inline-block;width:15.7px;text-align:center">技</span><span style="display:inline-block;width:15.7px;text-align:center">术</span><span style="display:inline-block;width:15.7px;text-align:center">小</span><span style="display:inline-block;width:15.7px;text-align:center">站</span></div>
</body></html>
